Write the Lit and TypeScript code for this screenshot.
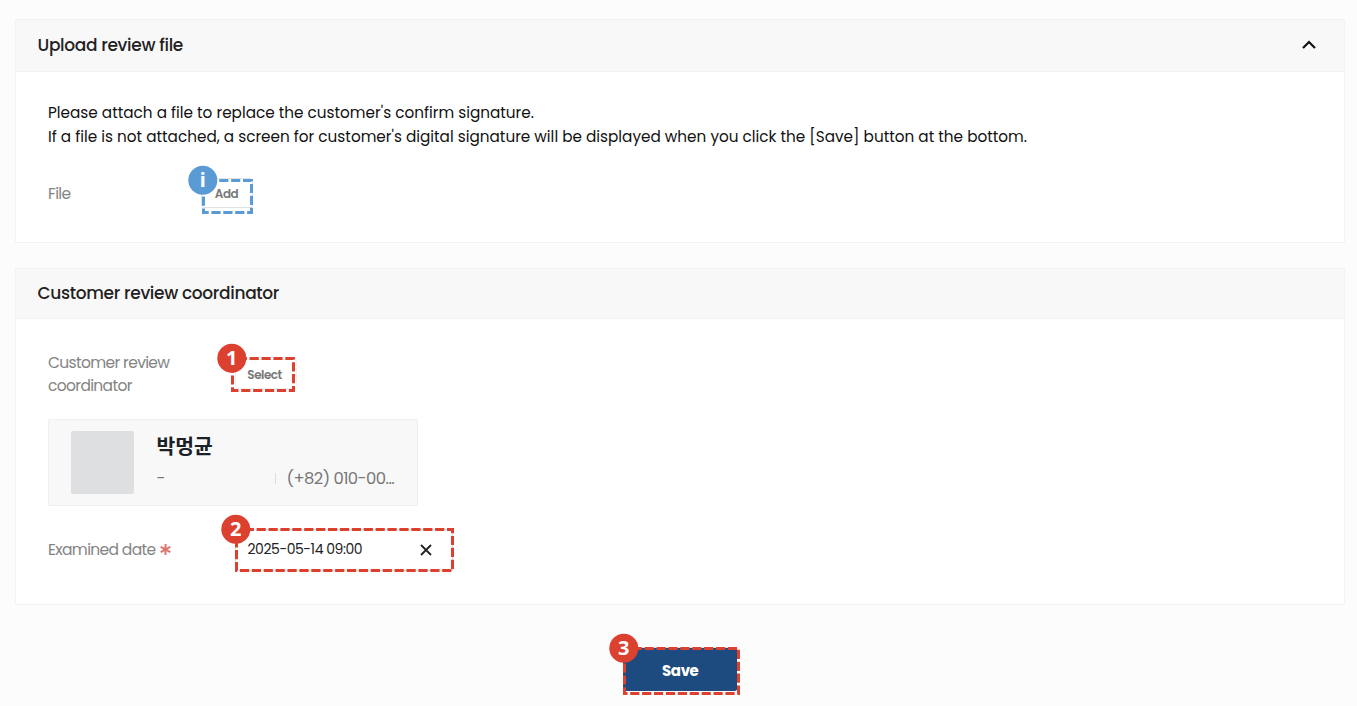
import { LitElement, html, css, svg } from "lit";
import { customElement, property } from "lit/decorators.js";

@customElement("callout-mark")
class CalloutMark extends LitElement {
  @property({ type: Number }) w = 50;
  @property({ type: Number }) h = 35;
  @property({ type: Number }) phase = 0;
  @property() label = "";
  @property() color = "#dc4130";
  static styles = css`
    :host { position: absolute; display: block; pointer-events: none; }
    svg { display: block; overflow: visible; }
    text { font: 700 20px "Noto Sans", "Open Sans", sans-serif; fill: #fff; text-anchor: middle; letter-spacing: 0; }
  `;
  render() {
    const { w, h, color } = this;
    return html`<svg width=${w} height=${h} fill="none">
      ${svg`<rect x="1.5" y="1.5" width=${w - 3} height=${h - 3} stroke=${color} stroke-width="3" stroke-dasharray="9.2 2.7" stroke-dashoffset=${this.phase}/>
      <circle cx="0.8" cy="1.2" r="14.5" fill=${color}/>
      <text x="0.8" y="8.2">${this.label}</text>`}
    </svg>`;
  }
}

@customElement("app-root")
class AppRoot extends LitElement {
  static styles = css`
    * { box-sizing: border-box; }
    :host { display: block; width: 1357px; height: 706px; overflow: hidden; background: #fcfcfc; padding: 19px 12px 0 14.5px; box-sizing: border-box;
      font-family: Poppins, Inter, "Noto Sans CJK KR", sans-serif; color: #111; font-size: 15px; }
    span { white-space: nowrap; }
    .card { border: 1.5px solid #f2f2f2; border-radius: 2px; background: #fff; width: 1330px; }
    .upload { height: 224px; margin-bottom: 25px; }
    .review { height: 337px; }
    .head { display: flex; align-items: center; justify-content: space-between; height: 51.5px; padding: 0 27px 0 22px; background: #f8f8f8; border-bottom: 1px solid #f2f2f2; font-size: 17px; font-weight: 500; letter-spacing: -.33px; color: #222; }
    .review .head { height: 50px; padding-bottom: 1px; }
    .body { padding: 29px 32px 0 32.5px; }
    .line { height: 24px; line-height: 24px; font-size: 15.25px; }
    .row { display: flex; align-items: center; color: #848484; font-size: 15.5px; letter-spacing: -.66px; }
    .file { margin-top: 27.5px; height: 34px; }
    .label { width: 152.5px; }
    .review .label { width: 186.5px; line-height: 23px; }
    .btn { position: relative; font-size: 12px; font-weight: 600; color: #777; border: 1px solid #dfe3e8; border-radius: 3px; background: #fff; height: 30px; display: flex; align-items: center; justify-content: center; letter-spacing: -.5px; }
    .btn span { margin-top: 2px; }
    .add { width: 52px; }
    .select { width: 62px; border-color: #f0f0f0; }
    .select span { margin-right: 2px; }
    .mark { left: 0; top: 0; }
    .select .mark { left: -5px; top: -3px; }
    .coord { height: 46px; margin-top: 3px; }
    .person { margin-top: 21.5px; margin-left: -.5px; width: 370.5px; height: 87px; border: 1px solid #efefef; border-radius: 2px; background: #f8f8f8; display: flex; padding: 11px 22px; }
    .avatar { flex: none; width: 63px; height: 63px; border-radius: 2px; background: #dedfe1; margin-right: 23px; }
    .name { font: 700 20.4px/29px "Noto Sans CJK KR", sans-serif; height: 32px; color: #1b2127; }
    .meta { display: flex; align-items: center; height: 32px; font-size: 16.4px; letter-spacing: -.55px; color: #777; }
    .dash { width: 118px; }
    .sep { width: 1px; height: 11px; background: #ddd; margin-right: 11px; }
    .date { margin-top: 22px; height: 44px; }
    .star { margin-left: 5px; }
    .field { position: relative; display: flex; align-items: center; justify-content: space-between; width: 218px; height: 42px; padding: 0 20px 0 12px; border: 1px solid #d8dde2; color: #222; font-size: 14px; letter-spacing: -.45px; }
    .field .mark { left: -1px; top: -1.5px; }
    .foot { display: flex; justify-content: center; padding-top: 43px; }
    .save { position: relative; width: 114px; height: 43px; margin-left: 1px; background: #1d4b80; border-radius: 2px; display: flex; align-items: center; justify-content: center; color: #fff; font-size: 15px; letter-spacing: -.4px; font-weight: 700; }
    .save span { margin-top: 2px; }
    .save .mark { left: -.5px; top: -1px; }
  `;
  render() {
    return html`
      <section class="card upload">
        <div class="head"><span>Upload review file</span>
          <svg width="16" height="10" viewBox="0 0 16 10" fill="none" stroke="#111" stroke-width="2.2"><path d="M2 8 8 2 14 8"/></svg></div>
        <div class="body">
          <div class="line"><span>Please attach a file to replace the customer's confirm signature.</span></div>
          <div class="line"><span>If a file is not attached, a screen for customer's digital signature will be displayed when you click the [Save] button at the bottom.</span></div>
          <div class="row file"><div class="label"><span>File</span></div>
            <div class="btn add"><span>Add</span><callout-mark class="mark" w="51" h="35" phase="8.1" label="i" color="#5b9bd5"></callout-mark></div></div>
        </div>
      </section>
      <section class="card review">
        <div class="head"><span>Customer review coordinator</span></div>
        <div class="body">
          <div class="row coord"><div class="label"><span>Customer review</span><br><span>coordinator</span></div>
            <div class="btn select"><span>Select</span><callout-mark class="mark" w="64" h="35" phase="6.7" label="1"></callout-mark></div></div>
          <div class="person"><div class="avatar"></div><div>
            <div class="name"><span>박멍균</span></div>
            <div class="meta"><span class="dash">-</span><i class="sep"></i><span>(+82) 010-00...</span></div></div></div>
          <div class="row date"><div class="label"><span>Examined date</span><svg class="star" width="11" height="11" viewBox="0 0 11 11" stroke="#d9776f" stroke-width="2"><path d="M5.5 0v11M.7 2.8l9.6 5.4M.7 8.2l9.6-5.4"/></svg></div>
            <div class="field"><span>2025-05-14 09:00</span><svg width="12" height="12" stroke="#222" stroke-width="1.8"><path d="m1 1 10 10M11 1 1 11"/></svg><callout-mark class="mark" w="219" h="44" phase="3.7" label="2"></callout-mark></div></div>
        </div>
      </section>
      <div class="foot"><div class="save"><span>Save</span><callout-mark class="mark" w="117" h="48" phase="3.7" label="3"></callout-mark></div></div>`;
  }
}
